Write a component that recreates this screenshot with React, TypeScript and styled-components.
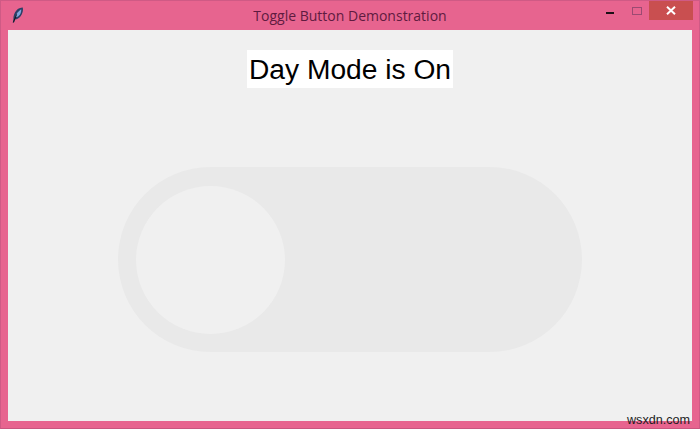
import React from 'react';
import styled, { createGlobalStyle } from 'styled-components';

const GlobalStyle = createGlobalStyle`
  html, body {
    margin: 0;
    padding: 0;
    background: #e7648f;
  }
`;

const App: React.FC = () => {
  return (
    <Window>
      <GlobalStyle />
      <TitleBar>
        <AppIcon viewBox="0 0 12 16" aria-hidden="true">
          <path d="M1.4 12 C1.2 9 2.4 5.6 4.4 3.4 C6.2 1.6 8.4 .6 10.8.6 C11.4 3.4 10.6 6.6 8.8 9 C7.2 11 5 12.4 3 12.6 L2 15.6 L.8 15.4 Z" fill="#2c3f66" />
          <path d="M3.4 9.6 C4.2 7 6 4.2 9.2 2.2 C9.6 4.6 8.4 7.4 6.6 9 C5.6 9.8 4.4 10.2 3.4 9.6 Z" fill="#7fa6dc" />
          <path d="M1.4 15.4 L4.6 7.4" stroke="#14141f" strokeWidth="1" fill="none" />
        </AppIcon>
        <Title>Toggle Button Demonstration</Title>
        <WindowControls>
          <MinimizeButton />
          <RestoreButton />
          <CloseButton>
            <svg width="10" height="9" viewBox="0 0 10 9" aria-hidden="true">
              <path d="M1 .8 L9 8.2 M9 .8 L1 8.2" stroke="#ffffff" strokeWidth="2" />
            </svg>
          </CloseButton>
        </WindowControls>
      </TitleBar>

      <Client>
        <ModeLabel>Day Mode is On</ModeLabel>
        <ToggleTrack>
          <ToggleKnob />
        </ToggleTrack>
      </Client>

      <Watermark>wsxdn.com</Watermark>
    </Window>
  );
};

const Window = styled.div`
  position: relative;
  width: 700px;
  height: 429px;
  display: flex;
  flex-direction: column;
  box-sizing: border-box;
  overflow: hidden;
  background: #e7648f;
  border: 1px solid #cf5a85;
  border-bottom-color: #c9557f;
`;

const TitleBar = styled.div`
  position: relative;
  height: 29px;
  flex-shrink: 0;
  display: flex;
  align-items: center;
  justify-content: center;
`;

const AppIcon = styled.svg`
  position: absolute;
  left: 11px;
  top: 6px;
  width: 12px;
  height: 16px;
`;

const Title = styled.div`
  font-family: 'Open Sans', 'Noto Sans', sans-serif;
  font-size: 14px;
  color: #5f1b40;
  margin-top: -1px;
`;

const WindowControls = styled.div`
  position: absolute;
  right: 6px;
  top: 0;
  display: flex;
  align-items: flex-start;
`;

const MinimizeButton = styled.div`
  width: 8px;
  height: 2px;
  margin-top: 11px;
  margin-right: 18px;
  background: #1c0f16;
`;

const RestoreButton = styled.div`
  width: 8px;
  height: 6px;
  margin-top: 6px;
  margin-right: 7px;
  border: 1px solid #9c4a72;
`;

const CloseButton = styled.div`
  width: 44px;
  height: 19px;
  display: flex;
  align-items: center;
  justify-content: center;
  background: #c94f50;
`;

const Client = styled.div`
  flex: 1;
  margin: 0 7px 7px;
  display: flex;
  flex-direction: column;
  align-items: center;
  background: #f0f0f0;
`;

const ModeLabel = styled.div`
  margin-top: 20px;
  width: 206px;
  height: 38px;
  display: flex;
  align-items: center;
  justify-content: center;
  background: #ffffff;
  color: #000000;
  font-family: 'Liberation Sans', Arial, sans-serif;
  font-size: 28.2px;
  white-space: nowrap;
`;

const ToggleTrack = styled.div`
  margin-top: 79px;
  width: 464px;
  height: 185px;
  box-sizing: border-box;
  padding: 19px 18px;
  border-radius: 93px;
  background: #e9e9e9;
`;

const ToggleKnob = styled.div`
  width: 149px;
  height: 148px;
  border-radius: 50%;
  background: #f0f0f0;
`;

const Watermark = styled.div`
  position: absolute;
  right: 9px;
  bottom: 1px;
  font-family: 'Liberation Sans', Arial, sans-serif;
  font-size: 12.6px;
  line-height: 14px;
  color: #1d1d1d;
`;

export default App;
